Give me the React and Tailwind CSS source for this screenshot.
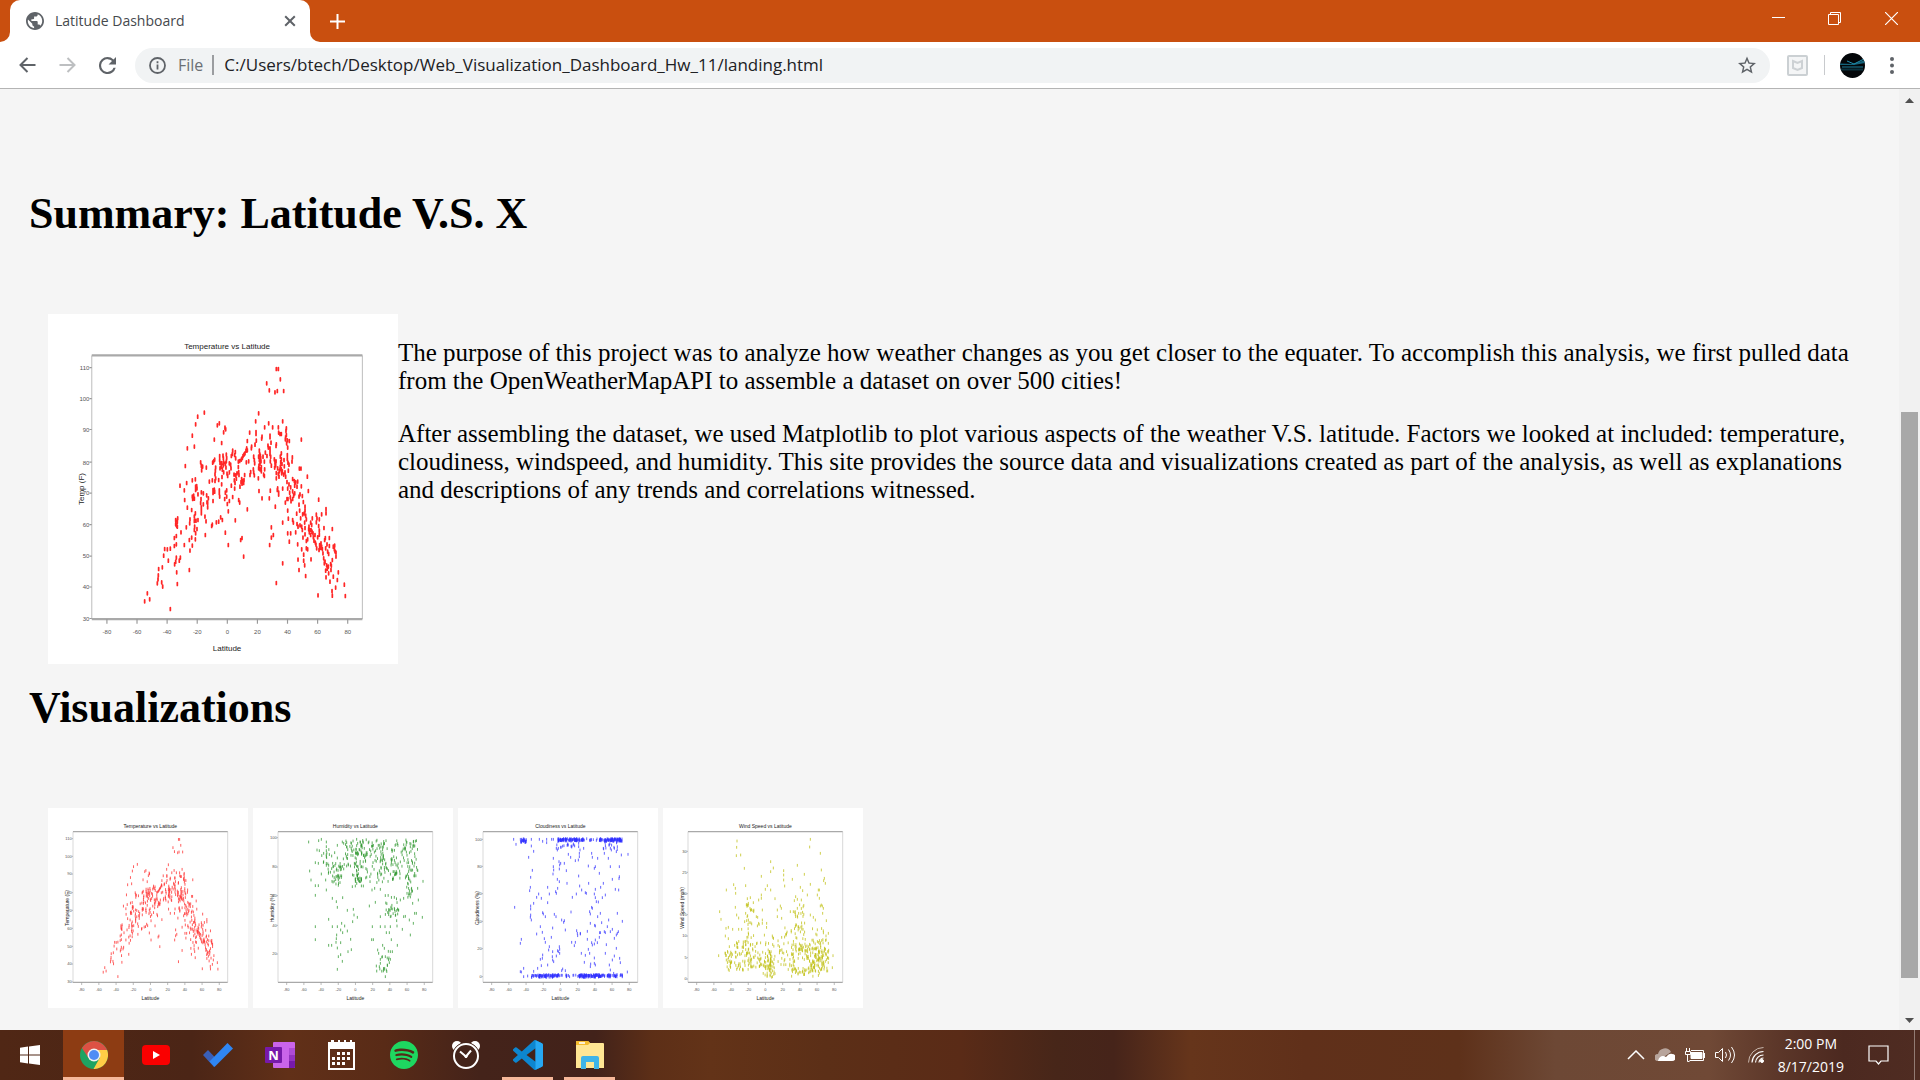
import React from "react";

const UI = "font-['Open_Sans','Noto_Sans',sans-serif]";

/* ---------- chart data, in units of a 600 x 600 chart ---------- */

const parse = (s, ox = 0, oy = 0, k = 1) =>
  s.trim().split(/\s+/).map((p) => {
    const [x, y] = p.split(",").map(Number);
    return [(x - ox) * k, (y - oy) * k];
  });

// Evenly spread points of a dense region: [count, x0, x1, y0, y1]
const spread = (seed, areas) => {
  let s = seed;
  const next = () => {
    s = (s * 16807) % 2147483647;
    return s / 2147483647;
  };
  const out = [];
  areas.forEach(([n, x0, x1, y0, y1]) => {
    for (let i = 0; i < n; i++) out.push([x0 + next() * (x1 - x0), y0 + next() * (y1 - y0)]);
  });
  return out;
};

const temperature = parse(
  `709,207 715,207 721,238 680,250 688,271 705,277 712,273 731,273 473,350 493,338 467,373 457,407 442,445 463,440 436,498
  538,370 532,376 555,383 557,388 551,397 523,419 545,429 656,340 647,364 648,396 648,402 686,370 674,382 698,382 728,364 715,382
  716,398 720,402 724,402 739,385 738,392 739,405 737,412 736,418 742,421 748,423 784,419 629,398 622,423 666,410 665,416 690,407
  690,412 709,433 708,438 693,428 649,422 645,434 635,440 634,445 620,445 622,451 618,452 615,460 612,464 609,468 607,474 604,479
  626,484 619,487 578,452 586,456 577,462 584,465 574,468 559,464 560,474 587,475 549,467 539,468 550,475 539,480 559,484 521,484
  518,488 482,487 484,497 488,500 485,511 499,503 524,479 527,503 526,512 525,523 527,535 525,543 540,489 545,489 551,487 556,491
  550,496 544,500 540,505 547,509 558,503 568,490 572,494 573,505 568,517 561,521 563,528 551,517 546,531 536,540 545,553 538,571
  538,580 539,590 560,571 556,578 560,590 554,597 562,612 568,603 565,634 574,557 582,524 587,526 589,536 583,541 591,520 585,549
  584,566 578,591 595,485 599,483 595,501 596,516 597,525 605,537 603,546 608,543 611,549 612,540 614,525 600,560 606,551 596,600
  599,608 641,470 643,480 644,490 640,508 641,517 643,526 630,525 632,516 655,535 658,452 659,462 656,470 661,467 662,474 658,480
  663,484 660,490 657,497 664,501 660,508 664,514 656,505 669,470 676,458 684,437 685,443 690,445 690,453 690,462 692,470 681,468
  691,484 694,497 673,485 674,508 671,524 673,528 657,573 666,595 688,595 691,572 703,478 705,488 707,496 704,503 708,484 724,460
  721,470 724,478 722,486 726,492 721,500 724,508 718,514 725,520 715,522 717,530 709,535 732,480 733,499 735,517 731,524 737,530
  742,465 742,477 744,488 747,494 745,512 757,472 756,485 740,430 743,443 778,506 783,506 802,530 709,519 720,508 727,514 713,505
  741,546 747,553 743,566 749,578 751,592 741,597 736,608 752,562 758,537 763,543 767,547 771,560 773,545 764,557 758,574 761,587
  758,597 764,580 753,604 744,597 784,559 787,588 780,583 777,590 790,606 777,614 779,632 770,641 782,655 788,643 795,620 795,632
  793,640 797,647 799,658 805,573 712,570 716,578 713,565 728,566 716,584 706,620 728,668 694,682 700,705 694,713 689,735 743,632
  745,656 758,660 760,668 743,700 752,700 748,725 767,697 773,733 771,672 774,680 780,676 785,680 787,690 794,668 795,684 795,703
  789,713 799,723 803,718 803,748 799,745 785,748 791,764 791,782 794,796 774,779 777,810 797,828 813,778 806,688 812,668 817,655
  807,680 815,675 809,690 816,695 812,705 820,712 822,722 828,734 826,728 830,745 829,644 831,655 829,667 836,599 838,658 836,678
  838,692 838,704 833,712 839,735 845,740 843,730 837,750 849,760 845,643 858,627 858,640 852,684 856,714 868,714 877,687 868,738
  863,755 866,762 857,745 851,775 855,785 860,796 853,790 862,806 857,812 858,832 865,800 872,792 877,780 866,820 874,797 870,845
  880,830 873,810 884,737 883,748 888,758 888,770 880,740 885,754 895,817 892,840 887,863 913,854 916,888 876,873 877,887 834,886
  709,849 728,790 622,628 586,661 556,698 565,735 602,720 606,714 611,770 542,652 547,660 536,665 529,667 517,674 515,678 495,650
  498,664 496,705 484,630 484,622 484,640 490,613 490,580 484,577 500,586 505,595 503,609 503,622 519,603 519,579 524,575 508,545
  517,541 466,538 457,541 440,549 420,557 433,571 434,600 442,623 457,590 461,587 463,596 467,560 467,570 470,558 471,565 474,583
  455,630 450,658 439,682 449,670 466,640 463,650 463,663 468,662 474,660 471,687 463,690 464,680 467,700 466,718 455,713 448,720
  457,737 450,752 448,810 433,735 423,697 409,708 403,714 409,733 403,738 413,655 407,660 407,673 412,680 410,677 412,665 382,748
  391,746 374,747 371,767 385,782 409,773 421,773 418,782 407,785 404,793 410,817 412,852 367,802 356,807 355,826 354,838 352,850
  365,847 368,860 322,880 329,898 314,904 391,927 458,597 483,597 482,609 501,607 523,569 519,570 847,747 854,720 861,733 839,745
  825,705 813,690 819,700 808,697 843,743`,
  24, 42, 600 / 1050
);

const humidity = [
  ...parse(
    `176,126 206,122 214,118 201,150 208,152 229,126 229,140 229,152 221,160 229,170 196,188 221,185 205,190 229,190 229,196 214,222
    179,213 183,240 196,257 205,257 196,286 229,270 262,136 254,158 245,168 262,174 281,130 290,128 304,130 320,118 323,130 290,140
    248,190 245,206 236,196 268,201 274,208 246,244 265,240 265,256 227,240 258,230 248,228 247,295 259,305 262,322 278,293 292,331
    236,358 247,380 262,380 196,380 196,419 275,370 284,378 278,398 272,390 292,393 260,405 259,416 258,427 245,436 236,436 272,428
    262,444 272,464 265,470 277,484 262,508 302,418 304,449 294,455 310,328 312,345 308,365 322,352 358,318 376,307 391,350 367,380
    365,419 370,419 391,380 405,380 409,398 418,398 424,419 442,436 416,344 421,350 433,325 445,330 443,342 437,345 440,362 457,388
    461,350 466,349 478,360 490,370 481,405 517,352 494,340 499,340 488,310 505,300 503,265 519,244 461,295 451,300 433,292 421,380
    398,436 403,445 383,450 415,454 421,455 427,455 397,470 391,478 386,460 421,478 418,488 406,470 379,498 388,500 391,490 404,505
    412,495 406,530 409,510 441,378 477,286 471,280 366,270 374,265 391,268 340,258 307,260 316,258`,
    9, 24
  ),
  ...spread(31, [
    [60, 268, 338, 95, 185],
    [28, 305, 328, 110, 240],
    [30, 238, 266, 165, 230],
    [18, 298, 326, 200, 222],
    [75, 335, 420, 95, 225],
    [90, 415, 496, 95, 215],
    [26, 460, 480, 150, 270],
    [26, 396, 440, 262, 325],
    [24, 365, 396, 98, 200],
    [12, 205, 235, 115, 215],
    [12, 370, 412, 440, 492],
  ]),
];

const cloudiness = [
  ...parse(
    `176,118 196,118 207,118 214,119 183,133 229,118 229,138 236,154 221,172 232,211 227,232 226,262 224,272 236,310 227,318 227,327
    227,345 229,360 226,352 179,322 253,118 263,124 275,118 275,128 290,118 295,118 245,292 251,282 259,295 263,338 265,342 271,350
    278,308 278,262 283,282 256,380 245,402 262,397 199,418 196,430 268,416 271,427 289,412 293,384 298,343 303,350 302,275 308,265
    307,238 313,245 304,280 295,200 296,210 294,222 295,175 312,185 314,195 317,190 313,207 328,190 334,212 336,250 352,292 348,336
    364,282 371,228 374,258 380,270 391,278 394,280 401,250 410,160 412,172 421,200 418,205 400,198 428,175 433,220 448,160 445,250
    437,262 421,268 418,282 421,293 424,305 430,306 442,293 451,285 410,322 412,325 404,335 406,342 436,340 428,350 421,378 406,370
    419,376 440,368 461,360 457,380 448,395 451,398 466,395 472,238 481,268 491,270 493,230 492,236 493,200 466,200 499,165 519,163
    487,340 502,364 490,395 487,400 484,405 478,415 472,388 410,428 418,432 421,420 412,435 427,428 433,412 434,398 436,398 397,394
    397,418 400,448 404,460 451,460 454,434 418,474 421,495 407,492 406,500 418,490 379,460 391,466 388,487 350,427 358,437 361,427
    367,400 365,392 368,407 376,400 376,402 331,390 320,360 326,367 328,362 313,440 314,448 310,455 308,452 314,460 304,468 296,485
    292,470 293,455 281,450 283,440 263,465 262,475 256,478 259,497 278,495 293,480 484,445 478,468 494,475 496,488 472,480 463,495
    466,510 476,520 517,516 206,505 199,516 196,515 236,514 248,505 320,512 323,507 331,512 206,530 218,528 373,160 371,140 375,150
    373,170 370,180 361,182 371,130 386,145 340,163 347,172 478,145 487,140 484,155 460,175 469,150 466,145 445,145 307,150 310,145
    304,145`,
    9, 24
  ),
  ...spread(77, [
    [95, 300, 376, 92, 99],
    [90, 424, 492, 92, 100],
    [22, 188, 206, 92, 104],
    [14, 375, 430, 92, 98],
    [85, 220, 304, 500, 508],
    [95, 362, 425, 500, 508],
    [48, 425, 495, 500, 507],
    [16, 300, 360, 500, 507],
    [16, 295, 350, 100, 120],
    [12, 430, 480, 100, 125],
  ]),
];

const wind = [
  ...parse(
    `231,123 230,142 229,167 242,165 253,205 332,185 332,215 340,204 304,229 371,212 371,225 371,240 374,258 412,196 397,238 433,223
    451,118 449,141 481,160 484,210 451,253 493,235 491,242 496,250 421,262 428,272 199,270 221,254 226,265 227,280 257,257 322,257
    316,268 332,270 304,285 304,295 296,300 262,296 265,310 271,293 280,308 270,325 179,335 183,358 226,322 230,345 236,354 257,340
    345,296 361,318 352,330 364,325 352,350 365,355 407,290 403,302 412,298 424,300 442,285 478,270 472,285 475,270 478,295 484,315
    490,325 481,318 488,340 487,318 451,345 460,352 466,360 499,362 505,400 391,335 400,335 412,325 416,340 412,348 407,350 176,467
    198,385 205,382 196,408 205,416 208,440 218,388 236,388 214,470 214,488 196,460 199,480 205,508 519,467 517,503 505,430 289,350
    293,352 307,360 296,370 320,370 307,330 281,335 254,365 265,360 245,388`,
    9, 24
  ),
  ...spread(123, [
    [55, 215, 260, 395, 490],
    [26, 186, 220, 430, 490],
    [60, 255, 325, 430, 480],
    [45, 300, 336, 440, 508],
    [32, 250, 335, 340, 430],
    [45, 345, 400, 350, 490],
    [120, 385, 480, 400, 495],
    [60, 450, 498, 420, 490],
    [36, 390, 490, 360, 430],
    [20, 395, 425, 290, 360],
    [16, 250, 275, 280, 350],
    [18, 380, 480, 485, 505],
  ]),
];

const X_TICKS = ["-80", "-60", "-40", "-20", "0", "20", "40", "60", "80"];

function Scatter({ title, yLabel, points, color, yTicks, large, dot, opacity = 1 }) {
  const px = large ? 350 / 600 : 200 / 600;
  const [w, h] = dot;
  const d = points.map(([x, y]) => `M${x.toFixed(1)} ${(y - h / 2).toFixed(1)}v${h}`).join("");
  const titleSize = (large ? 8 : 5) / px;
  const tickSize = (large ? 6 : 4) / px;
  return (
    <svg
      viewBox="0 0 600 600"
      role="img"
      aria-label={title}
      className={large ? "block size-[350px] shrink-0 bg-white" : "block size-[200px] bg-white"}
    >
      <g fontFamily="'Liberation Sans Narrow', 'Liberation Sans', sans-serif" fill="#222">
        <text x="307" y="60" textAnchor="middle" fontSize={titleSize}>{title}</text>
        <text x="307" y="577" textAnchor="middle" fontSize={titleSize}>Latitude</text>
        <text transform="translate(62 300) rotate(-90)" textAnchor="middle" fontSize={titleSize}>{yLabel}</text>
        {X_TICKS.map((t, i) => (
          <text key={t} x={101 + i * 51.6} y="549" textAnchor="middle" fontSize={tickSize} fill="#555">{t}</text>
        ))}
        {yTicks.map(([t, y]) => (
          <text key={t} x="71" y={y + 4} textAnchor="end" fontSize={tickSize} fill="#555">{t}</text>
        ))}
      </g>
      <path d="M75 71V523M539 71V523" stroke="#c6c6c6" strokeWidth="2" />
      <path d="M75 71H539M75 523H539" stroke="#a9a9a9" strokeWidth="4" />
      <path
        d={X_TICKS.map((_, i) => `M${101 + i * 51.6} 523v8`).join("") + yTicks.map(([, y]) => `M75 ${y}h-4`).join("")}
        stroke="#999"
        strokeWidth="2"
      />
      <path d={d} stroke={color} strokeWidth={w} strokeLinecap="round" fill="none" opacity={opacity} />
    </svg>
  );
}

const tempTicks = [["110", 92], ["100", 145], ["90", 198], ["80", 254], ["70", 307], ["60", 361], ["50", 415], ["40", 468], ["30", 522]];
const humTicks = [["100", 89], ["80", 177], ["60", 263], ["40", 352], ["20", 438]];
const cloudTicks = [["100", 94], ["80", 175], ["60", 257], ["40", 340], ["20", 422], ["0", 506]];
const windTicks = [["30", 130], ["25", 193], ["20", 257], ["15", 320], ["10", 384], ["5", 449], ["0", 513]];

const charts = [
  { title: "Temperature vs Latitude", yLabel: "Temperature (F)", points: temperature, color: "#ff2a2a", yTicks: tempTicks },
  { title: "Humidity vs Latitude", yLabel: "Humidity (%)", points: humidity, color: "#2c962c", yTicks: humTicks },
  { title: "Cloudiness vs Latitude", yLabel: "Cloudiness (%)", points: cloudiness, color: "#3030ff", yTicks: cloudTicks },
  { title: "Wind Speed vs Latitude", yLabel: "Wind Speed (mph)", points: wind, color: "#bfbf10", yTicks: windTicks },
];

/* ---------- browser frame ---------- */

function TabStrip() {
  return (
    <header className="flex h-[42px] shrink-0 items-stretch bg-[#c94f0f] pl-[10px]">
      <div className="relative flex w-[300px] items-center rounded-t-[10px] bg-white pl-4 pr-[14px]">
        <svg className="absolute bottom-0 -left-[10px]" width="10" height="10" viewBox="0 0 10 10">
          <path d="M10 0v10H0A10 10 0 0 0 10 0z" fill="#fff" />
        </svg>
        <svg className="absolute bottom-0 -right-[10px]" width="10" height="10" viewBox="0 0 10 10">
          <path d="M0 0v10h10A10 10 0 0 1 0 0z" fill="#fff" />
        </svg>
        <svg width="18" height="18" viewBox="2 2 20 20" fill="#5f6368">
          <path d="M12 2C6.48 2 2 6.48 2 12s4.48 10 10 10 10-4.48 10-10S17.52 2 12 2zm-1 17.93c-3.95-.49-7-3.85-7-7.93 0-.62.08-1.21.21-1.79L9 15v1c0 1.1.9 2 2 2v1.93zm6.900-2.540c-.26-.81-1-1.390-1.900-1.390h-1v-3c0-.55-.45-1-1-1H8v-2h2c.55 0 1-.45 1-1V7h2c1.100 0 2-.9 2-2v-.41c2.930 1.190 5 4.060 5 7.410 0 2.080-.8 3.970-2.100 5.390z" />
        </svg>
        <span className="ml-[11px] flex-1 text-[14px] leading-5 text-[#45494d]">Latitude Dashboard</span>
        <button aria-label="Close tab">
          <svg width="12" height="12" viewBox="0 0 12 12" stroke="#5f6368" strokeWidth="2">
            <path d="M1.200 1.200l9.600 9.600M10.800 1.200l-9.600 9.600" />
          </svg>
        </button>
      </div>
      <button aria-label="New tab" className="ml-5 self-center">
        <svg width="15" height="15" viewBox="0 0 15 15" stroke="#fff" strokeWidth="2">
          <path d="M7.500 0v15M0 7.500h15" />
        </svg>
      </button>
      <div className="ml-auto flex h-[37px] items-center">
        <button aria-label="Minimize" className="flex w-14 justify-center">
          <svg width="13" height="13" viewBox="0 0 13 13"><path d="M0 5.500h13" stroke="#fff" /></svg>
        </button>
        <button aria-label="Restore" className="flex w-14 justify-center">
          <svg width="13" height="13" viewBox="0 0 13 13" fill="none" stroke="#fff">
            <path d="M.5 2.500h10v10h-10zM2.500 2.500v-2h10v10h-2" />
          </svg>
        </button>
        <button aria-label="Close window" className="flex w-[58px] justify-center">
          <svg width="13" height="13" viewBox="0 0 13 13" stroke="#fff" strokeWidth="1.200">
            <path d="M0 0l13 13M13 0L0 13" />
          </svg>
        </button>
      </div>
    </header>
  );
}

function Toolbar() {
  return (
    <div className="flex h-[47px] shrink-0 items-center border-b border-[#b4b4b4] bg-white pr-[26px] pl-[19px]">
      <div className="flex w-[116px] items-center gap-[23px]">
        <button aria-label="Back">
          <svg width="17" height="16" viewBox="0 0 17 16" fill="none" stroke="#5f6368" strokeWidth="2">
            <path d="M16.500 8H2M8.500 1L1.500 8l7 7" />
          </svg>
        </button>
        <button aria-label="Forward">
          <svg width="17" height="16" viewBox="0 0 17 16" fill="none" stroke="#bdbfc1" strokeWidth="2">
            <path d="M.5 8H15M8.500 1l7 7-7 7" />
          </svg>
        </button>
        <button aria-label="Reload">
          <svg width="17" height="17" viewBox="4 4 16 16" fill="#5f6368">
            <path d="M17.650 6.350A7.960 7.960 0 0 0 12 4a8 8 0 1 0 7.730 10h-2.080A6 6 0 1 1 12 6c1.660 0 3.140.69 4.220 1.780L13 11h7V4l-2.350 2.350z" />
          </svg>
        </button>
      </div>
      <div className="flex h-[35px] flex-1 items-center rounded-full bg-[#f1f3f4] pr-[14px] pl-[14px]">
        <svg width="17" height="17" viewBox="0 0 17 17" fill="none" stroke="#5f6368" strokeWidth="1.800">
          <circle cx="8.500" cy="8.500" r="7.500" />
          <path d="M8.500 7.500v5M8.500 4.200v2" />
        </svg>
        <label htmlFor="url" className="ml-3 text-[16px] leading-5 text-[#6b6f74]">File</label>
        <span className="ml-[9px] h-5 w-[2px] bg-[#9b9da0]" />
        <input
          id="url"
          readOnly
          className="ml-[10px] min-w-0 flex-1 bg-transparent text-[17px] leading-5 text-[#202124] outline-none"
          defaultValue="C:/Users/btech/Desktop/Web_Visualization_Dashboard_Hw_11/landing.html"
        />
        <button aria-label="Bookmark this page">
          <svg width="18" height="18" viewBox="2 2 20 19" fill="#5f6368">
            <path d="M22 9.240l-7.190-.62L12 2 9.190 8.630 2 9.240l5.460 4.730L5.820 21 12 17.270 18.180 21l-1.630-7.030L22 9.240zM12 15.400l-3.760 2.270 1-4.280-3.320-2.880 4.380-.38L12 6.100l1.710 4.040 4.380.38-3.320 2.880 1 4.280L12 15.400z" />
          </svg>
        </button>
      </div>
      <button aria-label="McAfee WebAdvisor" className="ml-[17px]">
        <svg width="21" height="21" viewBox="0 0 21 21" fill="none">
          <rect x="1" y="1" width="19" height="19" rx="1" fill="#f4f5f6" stroke="#cbd0d3" strokeWidth="2" />
          <path d="M6 6l4.500 2L15 6v7l-4.500 2L6 13z" stroke="#cdd1d4" strokeWidth="2" />
        </svg>
      </button>
      <span className="ml-4 h-5 w-px bg-[#c8cacd]" />
      <button aria-label="Profile" className="ml-[15px] size-[25px] overflow-hidden rounded-full">
        <svg width="25" height="25" viewBox="0 0 25 25" fill="none">
          <path d="M0 0h25v25H0z" fill="#030609" />
          <path d="M0 10.500l13 .5L25 7v3l-11 2H0z" fill="#14627a" />
          <path d="M7 8l7 3 10-5" stroke="#2192b3" />
          <path d="M2 14h21" stroke="#1c7f9c" />
          <path d="M1 16.500h22" stroke="#0b303d" strokeWidth="2" />
        </svg>
      </button>
      <button aria-label="Menu" className="ml-[25px]">
        <svg width="4" height="17" viewBox="0 0 4 17" fill="#5f6368">
          <circle cx="2" cy="2" r="2" /><circle cx="2" cy="8.500" r="2" /><circle cx="2" cy="15" r="2" />
        </svg>
      </button>
    </div>
  );
}

function ScrollBar() {
  return (
    <div className="flex w-[21px] shrink-0 flex-col items-center bg-[#f1f1f1]">
      <button aria-label="Scroll up" className="flex h-[23px] items-center">
        <svg width="9" height="5" viewBox="0 0 9 5" fill="#505050"><path d="M4.500 0L9 5H0z" /></svg>
      </button>
      <div className="flex w-[17px] flex-1 flex-col">
        <span className="grow-[300]" />
        <span className="grow-[566] bg-[#a8a8a8]" />
        <span className="grow-[33]" />
      </div>
      <button aria-label="Scroll down" className="flex h-[19px] items-center">
        <svg width="9" height="5" viewBox="0 0 9 5" fill="#505050"><path d="M0 0h9L4.500 5z" /></svg>
      </button>
    </div>
  );
}

function Page() {
  return (
    <main className="min-w-0 flex-1 bg-[#f5f5f5] px-[29px] pt-[99px] font-['Liberation_Serif',serif] text-black">
      <h1 className="text-[44px] leading-[52px] font-bold">Summary: Latitude V.S. X</h1>
      <section className="mt-[74px] flex items-start pr-2 pl-[19px]">
        <Scatter {...charts[0]} yLabel="Temp (F)" color="#ff1414" large dot={[3, 5]} opacity={0.92} />
        <div className="pt-[25px] text-[25px] leading-7">
          <p>
            The purpose of this project was to analyze how weather changes as you get closer to the equater. To
            accomplish this analysis, we first pulled data from the OpenWeatherMapAPI to assemble a dataset on over 500
            cities!
          </p>
          <p className="mt-[25px]">
            After assembling the dataset, we used Matplotlib to plot various aspects of the weather V.S. latitude.
            Factors we looked at included: temperature, cloudiness, windspeed, and humidity. This site provides the
            source data and visualizations created as part of the analysis, as well as explanations and descriptions of
            any trends and correlations witnessed.
          </p>
        </div>
      </section>
      <h1 className="mt-[18px] text-[44px] leading-[52px] font-bold">Visualizations</h1>
      <nav className="mt-[74px] flex gap-[5px] pl-[19px]">
        {charts.map((c) => (
          <a key={c.title} href="#chart">
            <Scatter {...c} dot={[3, 6]} opacity={0.75} />
          </a>
        ))}
      </nav>
    </main>
  );
}

/* ---------- taskbar ---------- */

const Chrome = () => (
  <svg width="28" height="28" viewBox="0 0 28 28">
    <circle cx="14" cy="14" r="14" fill="#1ea362" />
    <path d="M1.900 7A14 14 0 0 1 26.100 7L27 9H14L8.500 17z" fill="#dd5144" />
    <path d="M27.100 9A14 14 0 0 1 13.500 28L20 16.500 17 9z" fill="#ffcd46" />
    <circle cx="14" cy="14" r="6.500" fill="#f1f1f1" />
    <circle cx="14" cy="14" r="5" fill="#4f8df5" />
  </svg>
);

const YouTube = () => (
  <svg width="28" height="20" viewBox="0 0 28 20">
    <rect width="28" height="20" rx="4" fill="#fa0000" />
    <path d="M11 6l7 4-7 4z" fill="#fff" />
  </svg>
);

const Todo = () => (
  <svg width="30" height="24" viewBox="0 0 30 24">
    <path d="M0 12l5-5 8.500 9-2.500 8z" fill="#3a5fb8" />
    <path d="M24.500 0L30 5.500 11.500 24 6.500 18.500z" fill="#2f86f3" />
  </svg>
);

const OneNote = () => (
  <svg width="30" height="26" viewBox="0 0 30 26">
    <rect x="8" width="22" height="26" rx="1" fill="#ca64ea" />
    <path d="M24 6h6v7h-6z" fill="#ae4bd5" />
    <path d="M24 13h6v6h-6z" fill="#9332bf" />
    <path d="M24 19h6v6a1 1 0 0 1-1 1h-5z" fill="#7719aa" />
    <rect y="5" width="17" height="16" rx="1" fill="#7719aa" />
    <text x="8.500" y="17.500" textAnchor="middle" fontSize="13" fontWeight="700" fill="#fff" fontFamily="'Open Sans', sans-serif">N</text>
  </svg>
);

const Calendar = () => (
  <svg width="27" height="30" viewBox="0 0 27 30" fill="#fff">
    <path fillRule="evenodd" d="M0 2h3V0h3v2h4V0h2v2h4V0h2v2h4V0h2v2h3v28H0zM2 9v19h23V9z" />
    <path d="M9 12h3v3H9zM14 12h3v3h-3zM19 12h3v3h-3zM4 17h3v3H4zM9 17h3v3H9zM14 17h3v3h-3zM19 17h3v3h-3zM4 22h3v3H4zM9 22h3v3H9zM14 22h3v3h-3z" />
  </svg>
);

const Spotify = () => (
  <svg width="28" height="28" viewBox="0 0 24 24" fill="#1ed760">
    <path d="M12 0C5.400 0 0 5.400 0 12s5.400 12 12 12 12-5.400 12-12S18.660 0 12 0zm5.521 17.340c-.24.359-.66.48-1.021.24-2.820-1.740-6.360-2.101-10.561-1.141-.418.122-.779-.179-.899-.539-.12-.421.18-.78.54-.9 4.560-1.021 8.520-.6 11.640 1.320.42.18.479.659.301 1.020zm1.440-3.300c-.301.42-.841.6-1.262.3-3.239-1.980-8.159-2.580-11.939-1.380-.479.12-1.020-.12-1.140-.6-.12-.48.12-1.021.6-1.141C9.600 9.900 15 10.561 18.720 12.840c.361.181.54.78.241 1.200zm.12-3.360C15.240 8.400 8.820 8.160 5.160 9.301c-.6.179-1.200-.181-1.380-.721-.18-.601.18-1.200.72-1.381 4.260-1.260 11.280-1.020 15.721 1.621.539.3.719 1.020.419 1.560-.299.421-1.020.599-1.559.3z" />
  </svg>
);

const Alarm = () => (
  <svg width="28" height="28" viewBox="0 0 28 28" fill="none" stroke="#fff">
    <circle cx="5" cy="5" r="5" fill="#fff" stroke="none" />
    <circle cx="23" cy="5" r="5" fill="#fff" stroke="none" />
    <circle cx="14" cy="15" r="13.500" fill="#44241a" stroke="#44241a" />
    <circle cx="14" cy="15" r="12" strokeWidth="2" />
    <path d="M8 10.500l6 5 5-6" strokeWidth="2" />
    <circle cx="14" cy="15.500" r="1.200" fill="#fff" />
  </svg>
);

const VSCode = () => (
  <svg width="30" height="30" viewBox="0 0 24 24">
    <path fill="#0d86cf" d="M23.150 2.587L18.210.21a1.494 1.494 0 0 0-1.705.29l-9.460 8.630-4.120-3.128a.999.999 0 0 0-1.276.057L.327 7.261A1 1 0 0 0 .326 8.740L3.899 12 .326 15.260a1 1 0 0 0 .001 1.479L1.650 17.940a.999.999 0 0 0 1.276.057l4.120-3.128 9.460 8.630a1.492 1.492 0 0 0 1.704.29l4.942-2.377A1.500 1.500 0 0 0 24 20.060V3.939a1.500 1.500 0 0 0-.85-1.352zm-5.146 14.861L10.826 12l7.178-5.448v10.896z" />
    <path fill="#27a8f2" d="M18 .15l5.150 2.437a1.500 1.500 0 0 1 .85 1.352V20.060a1.500 1.500 0 0 1-.848 1.352L18 23.850z" />
  </svg>
);

const Explorer = () => (
  <svg width="28" height="28" viewBox="0 0 28 28">
    <path d="M0 1a1 1 0 0 1 1-1h11l2 2h13a1 1 0 0 1 1 1v24H0z" fill="#ffe694" />
    <path d="M0 1a1 1 0 0 1 1-1h11l2 2-2 2H0z" fill="#f5bc2e" />
    <path d="M3 1.200h6v1.600H3z" fill="#fff" />
    <path d="M5 28V17a2 2 0 0 1 2-2h14a2 2 0 0 1 2 2v11h-5v-7h-8v7z" fill="#3fb4e8" />
  </svg>
);

const apps = [
  { name: "Google Chrome", icon: <Chrome />, state: "active" },
  { name: "YouTube", icon: <YouTube /> },
  { name: "To Do", icon: <Todo /> },
  { name: "OneNote", icon: <OneNote /> },
  { name: "Calendar", icon: <Calendar /> },
  { name: "Spotify", icon: <Spotify /> },
  { name: "Alarms & Clock", icon: <Alarm /> },
  { name: "Visual Studio Code", icon: <VSCode />, state: "open" },
  { name: "File Explorer", icon: <Explorer />, state: "open" },
];

function Taskbar() {
  return (
    <footer className="flex h-[50px] shrink-0 items-stretch bg-[linear-gradient(90deg,#502715_0%,#4b2516_10%,#613018_15%,#592b17_20%,#44231a_25%,#42221a_31%,#5d2f17_34%,#633318_37%,#5c2f17_43%,#5a2b17_50%,#472619_55%,#46241a_58%,#66351b_62%,#60301a_68%,#5e311a_76%,#6d4835_81%,#704936_89%,#5a3528_93%,#4c2920_96%,#4f2c22_100%)] text-white">
      <button aria-label="Start" className="flex w-[60px] items-center justify-center">
        <svg width="20" height="20" viewBox="0 0 20 20" fill="#fff">
          <path d="M0 2.700L8 1.600V9.500H0zM9 1.500L20 0v9.500H9zM0 10.500h8v7.900L0 17.300zM9 10.500h11V20L9 18.500z" />
        </svg>
      </button>
      <div className="ml-[3px] flex gap-px">
        {apps.map((a) => (
          <button
            key={a.name}
            aria-label={a.name}
            className={
              a.state === "active"
                ? "flex w-[61px] flex-col items-center bg-[#8d3c13]"
                : "flex w-[61px] flex-col items-center"
            }
          >
            <span className="flex h-[47px] items-center pt-[3px]">{a.icon}</span>
            {a.state === "active" && <span className="h-[3px] w-full bg-[#f6b89a]" />}
            {a.state === "open" && <span className="h-[3px] w-[51px] bg-[#f6b89a]" />}
          </button>
        ))}
      </div>
      <div className="ml-auto flex items-center">
        <button aria-label="Show hidden icons">
          <svg width="18" height="10" viewBox="0 0 18 10" fill="none" stroke="#fff" strokeWidth="1.500"><path d="M1 9l8-8 8 8" /></svg>
        </button>
        <svg className="ml-[10px]" width="20" height="14" viewBox="0 0 20 14">
          <path d="M3 13a3.500 3.500 0 0 1 0-7 7 7 0 0 1 13-2z" fill="#b7a49b" />
          <path d="M3 13c1-5 5-6 8-4 2-3 5-4 6-3a3.500 3.500 0 0 1 0 7z" fill="#fff" />
          <path d="M3 13l4-4 11 4z" fill="#fff" />
        </svg>
        <svg className="ml-[10px]" width="20" height="14" viewBox="0 0 20 14" fill="none" stroke="#fff">
          <path d="M4.500 12.500h14v-10H6M19.500 5v5" />
          <path d="M6 4.500h11v6H6z" fill="#fff" />
          <path d="M1.500 0v3M4.500 0v3M.5 3.500h5v3h-5zM2.500 6v7.500h2" />
        </svg>
        <svg className="ml-[10px]" width="21" height="18" viewBox="0 0 21 18" fill="none" stroke="#fff">
          <path d="M.5 6.500h3l4-4v13l-4-4h-3zM10.500 6q2 3 0 6M13.500 3.500q4 5.500 0 11M16.500 1q6 8 0 16" />
        </svg>
        <svg className="ml-3" width="16" height="16" viewBox="0 0 16 16" fill="none" stroke="#fff">
          <path d="M.5 15.500a15 15 0 0 1 15-15" stroke="#c9b8ae" />
          <path d="M4 15.500A11.500 11.500 0 0 1 15.500 4.500M7.500 15.500a8 8 0 0 1 8-7.500M11 15.500A4.500 4.500 0 0 1 15.500 11" strokeWidth="1.200" />
          <circle cx="14" cy="14" r="1.500" fill="#fff" />
        </svg>
        <div className="ml-[14px] text-center text-[14px] leading-[23px]">
          <div>2:00 PM</div>
          <div>8/17/2019</div>
        </div>
        <button aria-label="Notifications" className="ml-6">
          <svg width="21" height="21" viewBox="0 0 21 21" fill="none" stroke="#fff" strokeWidth="1.200">
            <path d="M1 1h19v15h-7l-2.500 3-2.500-3H1z" />
          </svg>
        </button>
        <button aria-label="Show desktop" className="ml-[25px] h-full w-[6px] border-l border-[#927c74]" />
      </div>
    </footer>
  );
}

export default function App() {
  return (
    <div className={`flex min-h-screen flex-col ${UI}`}>
      <TabStrip />
      <Toolbar />
      <div className="flex flex-1">
        <Page />
        <ScrollBar />
      </div>
      <Taskbar />
    </div>
  );
}
